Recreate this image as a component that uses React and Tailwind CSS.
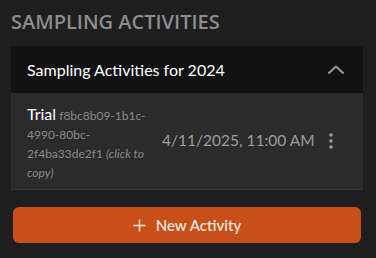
import React from "react";

export default function App() {
  return (
    <div
      className="w-[376px] h-[258px] bg-[#1e1e1e] overflow-hidden"
      style={{ fontFamily: "Lato, 'Open Sans', sans-serif" }}
    >
      <div className="pl-[11px] pr-[13px] pt-[8px]">
        <h2
          className="text-[20px] leading-[28px] font-semibold uppercase text-[#8c8c8c] tracking-[0px]"
          style={{ fontFamily: "'Open Sans', sans-serif" }}
        >
          Sampling Activities
        </h2>
        <div className="mt-[10px]">
          <div className="h-[47px] bg-[#121212] flex items-center justify-between pl-[16px] pr-[18px]">
            <span className="text-[16px] text-white">Sampling Activities for 2024</span>
            <svg width="18" height="12" viewBox="0 0 18 12" fill="none">
              <path d="M2 9 L9 2.5 L16 9" stroke="#9a9a9a" strokeWidth="2" strokeLinecap="round" strokeLinejoin="round" />
            </svg>
          </div>
          <div className="h-[97px] bg-[#2b2b2b] border-b border-[#3a3a3a] flex items-center pl-[16px] pr-[20px]">
            <div className="w-[124px] text-[12px] leading-[19px] text-[#8a8a8a] mt-[3px]">
              <span className="text-[16px] text-white">Trial</span>{" "}
              f8bc8b09-1b1c-4990-80bc-2f4ba33de2f1 <em>(click to copy)</em>
            </div>
            <div className="ml-[11px] text-[15.5px] text-[#9c9c9c]">4/11/2025, 11:00 AM</div>
            <div className="ml-auto w-[24px] flex justify-center">
              <svg width="4" height="16" viewBox="0 0 4 16">
                <circle cx="2" cy="2" r="1.8" fill="#9a9a9a" />
                <circle cx="2" cy="8" r="1.8" fill="#9a9a9a" />
                <circle cx="2" cy="14" r="1.8" fill="#9a9a9a" />
              </svg>
            </div>
          </div>
        </div>
        <button className="mt-[17px] ml-[2px] w-[348px] h-[36px] rounded-[6px] bg-[#c84f17] flex items-center justify-center gap-[10px] text-[15px] font-semibold text-[#f3e6de]">
          <svg width="13" height="13" viewBox="0 0 13 13">
            <path d="M6.5 0.5 V12.5 M0.5 6.5 H12.5" stroke="#f3e6de" strokeWidth="1.5" />
          </svg>
          <span>New Activity</span>
        </button>
      </div>
    </div>
  );
}
